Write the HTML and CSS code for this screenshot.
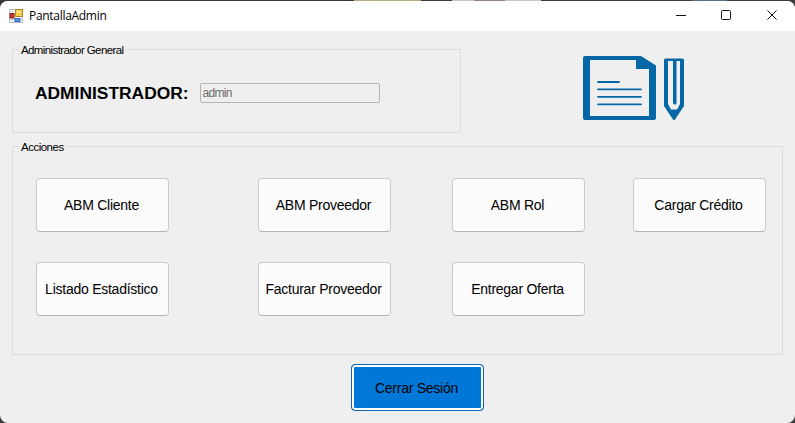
FILE: index.html
```html
<!DOCTYPE html>
<html lang="es">
<head>
<meta charset="utf-8">
<title>PantallaAdmin</title>
<link rel="stylesheet" href="styles.css">
</head>
<body>
<div class="window">
  <header class="titlebar">
    <svg class="app-icon" width="14" height="14" viewBox="0 0 14 14">
      <rect x=".5" y=".5" width="13" height="13" fill="#f6f8fb" stroke="#b9bdc4"/>
      <path d="M3.5 1v12M1 10.5h12" stroke="#cfd4dc"/>
      <rect x="6.5" y=".5" width="7" height="7" fill="#f7cf49" stroke="#a9852d"/>
      <rect x="8" y="2" width="3" height="2" fill="#ffe98d"/>
      <rect x="1" y="4.500" width="4" height="4.500" fill="#c8382b" stroke="#8d211b"/>
      <rect x="6" y="9.500" width="5" height="3" fill="#5b94e4" stroke="#376bb8"/>
    </svg>
    <h1 class="title">PantallaAdmin</h1>
    <svg class="controls" width="102" height="12" viewBox="0 0 102 12" fill="none" stroke="#111">
      <path d="M0 5.500h10"/>
      <rect x="45.500" y=".5" width="9" height="9" rx="1"/>
      <path d="M91.500 .5l9 9M100.500 .5l-9 9"/>
    </svg>
  </header>
  <main class="content">
    <div class="top">
      <fieldset class="group account">
        <legend>Administrador General</legend>
        <div class="field">
          <label class="role" for="user">ADMINISTRADOR:</label>
          <input class="user" id="user" value="admin" disabled>
        </div>
      </fieldset>
      <svg class="logo" width="102" height="65" viewBox="0 0 102 65">
        <path fill="#0667a6" fill-rule="evenodd" d="M2 0h56l15 9.500V62q0 2-2 2H2q-2 0-2-2V2q0-2 2-2zM7 4v56h59V13H53V4z"/>
        <path d="M15 26h21M15 33.300h43M15 40.800h43M15 48.300h43" stroke="#0667a6" stroke-width="1.800" stroke-linecap="round"/>
        <path fill="#0667a6" fill-rule="evenodd" d="M82.500 2.500h17q1.500 0 1.500 1.500v46l-9 13.500q-1 1-2 0L81 50V4q0-1.500 1.500-1.500zM85 5v43l3 5.500h6l3-5.500V5H93.500v42q0 1.500-1.500 1.500T90 47V5z"/>
      </svg>
    </div>
    <fieldset class="group actions">
      <legend>Acciones</legend>
      <div class="grid">
        <button>ABM Cliente</button>
        <button>ABM Proveedor</button>
        <button>ABM Rol</button>
        <button>Cargar Crédito</button>
        <button>Listado Estadístico</button>
        <button>Facturar Proveedor</button>
        <button>Entregar Oferta</button>
      </div>
    </fieldset>
    <button class="logout">Cerrar Sesión</button>
  </main>
</div>
</body>
</html>
```
FILE: styles.css
```css
* { box-sizing: border-box; }
body {
  margin: 0;
  height: 423px;
  padding-top: 1px;
  overflow: hidden;
  font-family: "Liberation Sans", Arial, sans-serif;
  color: #000;
  background: linear-gradient(90deg, #3b3637 354px, #b9ac85 354px 421px, #3d3b3d 421px 452px, #c9c9cc 452px 474px, #93837c 474px 505px, #c9c9cc 505px 541px, #3d3b3d 541px 692px, #59708a 692px 727px, #3d3b3d 727px);
}
.window {
  height: 422px;
  border-radius: 8px;
  overflow: hidden;
  background: #efefef;
}
.titlebar {
  display: flex;
  align-items: center;
  height: 30px;
  padding: 0 17px 0 9px;
  background: #fff;
}
.app-icon { margin-bottom: 1px; }
.title {
  margin: 0 auto 0 6px;
  font: 12px/16px "Open Sans", sans-serif;
  letter-spacing: -0.3px;
}
.content {
  display: flex;
  flex-direction: column;
  padding: 12px;
}
.top {
  display: flex;
  align-items: flex-start;
}
.group {
  min-width: 0;
  margin: 0;
  padding: 0;
  border: 1px solid #dcdcdc;
}
.group legend {
  height: 13px;
  margin-left: 6px;
  padding: 1px 2px 0;
  font-size: 11.5px;
  line-height: 13px;
  letter-spacing: -0.5px;
}
.account legend { letter-spacing: -0.6px; }
.account {
  width: 449px;
  height: 90px;
}
.field {
  display: flex;
  padding: 27px 0 0 22px;
}
.role {
  width: 165px;
  font-size: 17.4px;
  line-height: 20px;
  font-weight: bold;
  white-space: nowrap;
}
.user {
  width: 180px;
  height: 20px;
  margin: 0;
  padding: 0 1.5px;
  border: 1px solid #b5b5b5;
  border-radius: 2px;
  background: #efefef;
  color: #6d6d6d;
  font: 12px "Liberation Sans", Arial, sans-serif;
  letter-spacing: -0.7px;
}
.logo { margin: 13px 0 0 122px; }
.actions {
  width: 771px;
  height: 215px;
  margin-top: 7px;
}
.grid {
  display: grid;
  grid-template-columns: 222px 194px 181px 133px;
  grid-auto-rows: 54px;
  row-gap: 30px;
  padding: 25px 0 0 23px;
}
button {
  width: 133px;
  height: 54px;
  padding: 0 2px 0 0;
  border: 1px solid #cbcbcb;
  border-bottom-color: #b5b5b5;
  border-radius: 4px;
  background: #fbfbfb;
  color: #000;
  font: 14px "Liberation Sans", Arial, sans-serif;
  letter-spacing: -0.25px;
  white-space: nowrap;
}
.logout {
  align-self: flex-start;
  height: 47px;
  margin: 9px 0 0 339px;
  border: 1px solid #0f68b5;
  background: #0078d7;
  box-shadow: inset 0 0 0 2px #fff;
}
```
